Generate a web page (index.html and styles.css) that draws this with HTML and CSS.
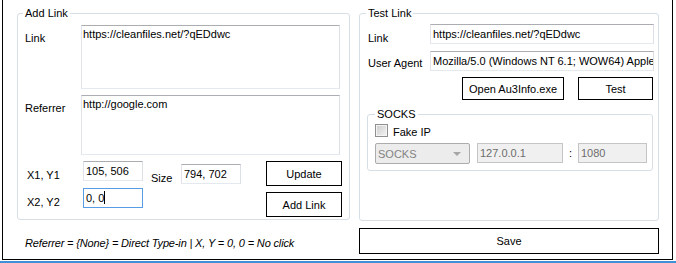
FILE: index.html
```html
<!DOCTYPE html>
<html>
<head>
<meta charset="utf-8">
<link rel="stylesheet" href="styles.css">
</head>
<body>
<div class="window">
  <fieldset class="group group-add">
    <legend class="gtitle">Add Link</legend>
    <div class="arow">
      <span class="lbl lbl-add">Link</span>
      <div class="tb area area-link">https://cleanfiles.net/?qEDdwc</div>
    </div>
    <div class="arow arow-ref">
      <span class="lbl lbl-add">Referrer</span>
      <div class="tb area area-ref">http://google.com</div>
    </div>
    <div class="coords">
      <div class="xy">
        <div class="xy-row"><span class="lbl lbl-xy">X1, Y1</span><div class="tb tb-sm">105, 506</div></div>
        <div class="xy-row"><span class="lbl lbl-xy">X2, Y2</span><div class="tb tb-sm focused">0, 0<span class="caret"></span></div></div>
      </div>
      <div class="size"><span class="lbl lbl-size">Size</span><div class="tb tb-sm">794, 702</div></div>
      <div class="btns">
        <button class="btn btn-side">Update</button>
        <button class="btn btn-side">Add Link</button>
      </div>
    </div>
  </fieldset>

  <fieldset class="group group-test">
    <legend class="gtitle">Test Link</legend>
    <div class="trow">
      <span class="lbl lbl-tlink">Link</span>
      <div class="tb tb-wide">https://cleanfiles.net/?qEDdwc</div>
    </div>
    <div class="trow trow-ua">
      <span class="lbl lbl-ua">User Agent</span>
      <div class="tb tb-wide">Mozilla/5.0 (Windows NT 6.1; WOW64) AppleWebKit/537.36 (KHTML, like Gecko)</div>
    </div>
    <div class="tbtns">
      <button class="btn btn-open">Open Au3Info.exe</button>
      <button class="btn btn-test">Test</button>
    </div>
    <fieldset class="group group-socks">
      <legend class="gtitle gtitle-socks">SOCKS</legend>
      <div class="chkrow">
        <span class="chk"></span>
        <span class="chk-lbl">Fake IP</span>
      </div>
      <div class="proxy">
        <div class="combo"><span>SOCKS</span><span class="arrow"></span></div>
        <div class="tb dis ip">127.0.0.1</div>
        <span class="colon">:</span>
        <div class="tb dis port">1080</div>
      </div>
    </fieldset>
  </fieldset>

  <p class="note">Referrer = {None} = Direct Type-in | X, Y = 0, 0 = No click</p>
  <button class="btn btn-save">Save</button>
</div>
</body>
</html>
```

FILE: styles.css
```css
html, body {
  margin: 0;
  padding: 0;
}
body {
  width: 676px;
  height: 263px;
  overflow: hidden;
  font: 11px/14px "Liberation Sans", Arial, sans-serif;
  color: #000;
  background: linear-gradient(to bottom, #ffffff 0, #ffffff 261px, #3d8fd6 261px);
}
.window {
  box-sizing: border-box;
  margin-left: 2px;
  width: 671px;
  height: 260px;
  border: 1px solid #000;
  border-top: none;
  background: #fff;
  padding: 6px 0 0 14px;
  display: grid;
  grid-template-columns: 333px 300px;
  grid-template-rows: 215px 26px;
  column-gap: 9px;
  row-gap: 7px;
}
.group {
  margin: 0;
  min-width: 0;
  border: 1px solid #d5dfe5;
  border-radius: 3px;
  box-sizing: border-box;
}
.gtitle {
  padding: 0 2px;
  margin-left: -2px;
  line-height: 14px;
}
.group-add {
  padding: 5px 7px 0 7px;
  height: 214px;
}
.group-test {
  padding: 4px 4px 0 8px;
}
.lbl {
  display: block;
  flex-shrink: 0;
  white-space: nowrap;
}
.tb {
  box-sizing: border-box;
  flex-shrink: 0;
  background: #fff;
  border: 1px solid;
  border-color: #abadb3 #dbdfe6 #e3e9ef #e2e3ea;
  white-space: nowrap;
  overflow: hidden;
}
/* Add link */
.arow {
  display: flex;
}
.arow-ref {
  margin-top: 6px;
}
.lbl-add {
  width: 56px;
  margin-top: 6px;
}
.area {
  width: 259px;
  padding: 2px 1px;
  line-height: 13px;
}
.area-link {
  height: 64px;
}
.area-ref {
  height: 60px;
}
.coords {
  display: flex;
  margin-top: 6px;
  padding-left: 2px;
}
.xy {
  display: flex;
  flex-direction: column;
  gap: 6px;
}
.xy-row {
  display: flex;
}
.lbl-xy {
  width: 56px;
  margin-top: 7px;
}
.tb-sm {
  width: 60px;
  height: 20px;
  padding: 0 2px;
  line-height: 18px;
}
.focused {
  border-color: #569de5;
}
.caret {
  display: inline-block;
  width: 1px;
  height: 13px;
  background: #000;
  vertical-align: -2px;
}
.size {
  display: flex;
  margin-left: 8px;
  margin-top: 3px;
  align-self: flex-start;
}
.lbl-size {
  width: 30px;
  margin-top: 7px;
}
.btns {
  display: flex;
  flex-direction: column;
  gap: 6px;
  margin-left: 25px;
}
.btn {
  box-sizing: border-box;
  font: inherit;
  line-height: 14px;
  color: #000;
  background: #fff;
  border: 1px solid #000;
  padding: 0;
  margin: 0;
  text-align: center;
  flex-shrink: 0;
}
.btn-side {
  width: 76px;
  height: 25px;
}
/* Test link */
.trow {
  display: flex;
}
.trow-ua {
  margin-top: 6px;
}
.lbl-tlink {
  width: 62px;
  margin-top: 7px;
}
.lbl-ua {
  width: 62px;
  margin-top: 5px;
}
.tb-wide {
  width: 224px;
  height: 20px;
  padding: 0 1px 0 2px;
  line-height: 18px;
}
.tbtns {
  display: flex;
  justify-content: flex-end;
  gap: 14px;
  margin-top: 6px;
  margin-right: 1px;
}
.btn-open {
  width: 102px;
  height: 23px;
}
.btn-test {
  width: 75px;
  height: 23px;
}
.group-socks {
  margin: 7px 0 0 -1px;
  width: 286px;
  padding: 3px 0 6px 7px;
}
.gtitle-socks {
  margin-left: 0;
}
.chkrow {
  display: flex;
  align-items: flex-start;
  height: 15px;
}
.chk {
  box-sizing: border-box;
  width: 13px;
  height: 13px;
  border: 1px solid #8e8f8f;
  box-shadow: inset 0 0 0 1px #f4f4f4;
  background: linear-gradient(135deg, #cbcbcb, #f4f4f4);
}
.chk-lbl {
  margin: 1px 0 0 5px;
}
.proxy {
  display: flex;
  margin-top: 4px;
  align-items: flex-start;
}
.combo {
  box-sizing: border-box;
  width: 95px;
  height: 21px;
  border: 1px solid #acacac;
  border-radius: 2px;
  background: #ececec;
  color: #838383;
  display: flex;
  justify-content: space-between;
  align-items: center;
  padding: 0 8px 0 2px;
}
.arrow {
  width: 0;
  height: 0;
  border-left: 4px solid transparent;
  border-right: 4px solid transparent;
  border-top: 4px solid #a6a6a6;
}
.dis {
  height: 20px;
  background: #f0f0f0;
  border-color: #c5c5c5;
  color: #6d6d6d;
  padding: 0 2px;
  line-height: 18px;
}
.ip {
  width: 86px;
  margin-left: 7px;
}
.colon {
  width: 15px;
  text-align: center;
  line-height: 20px;
  color: #000;
}
.port {
  width: 69px;
}
/* footer */
.note {
  margin: 0;
  padding: 8px 0 0 8px;
  font-style: italic;
  letter-spacing: -0.15px;
  white-space: nowrap;
}
.btn-save {
  width: 300px;
  height: 26px;
}
```
